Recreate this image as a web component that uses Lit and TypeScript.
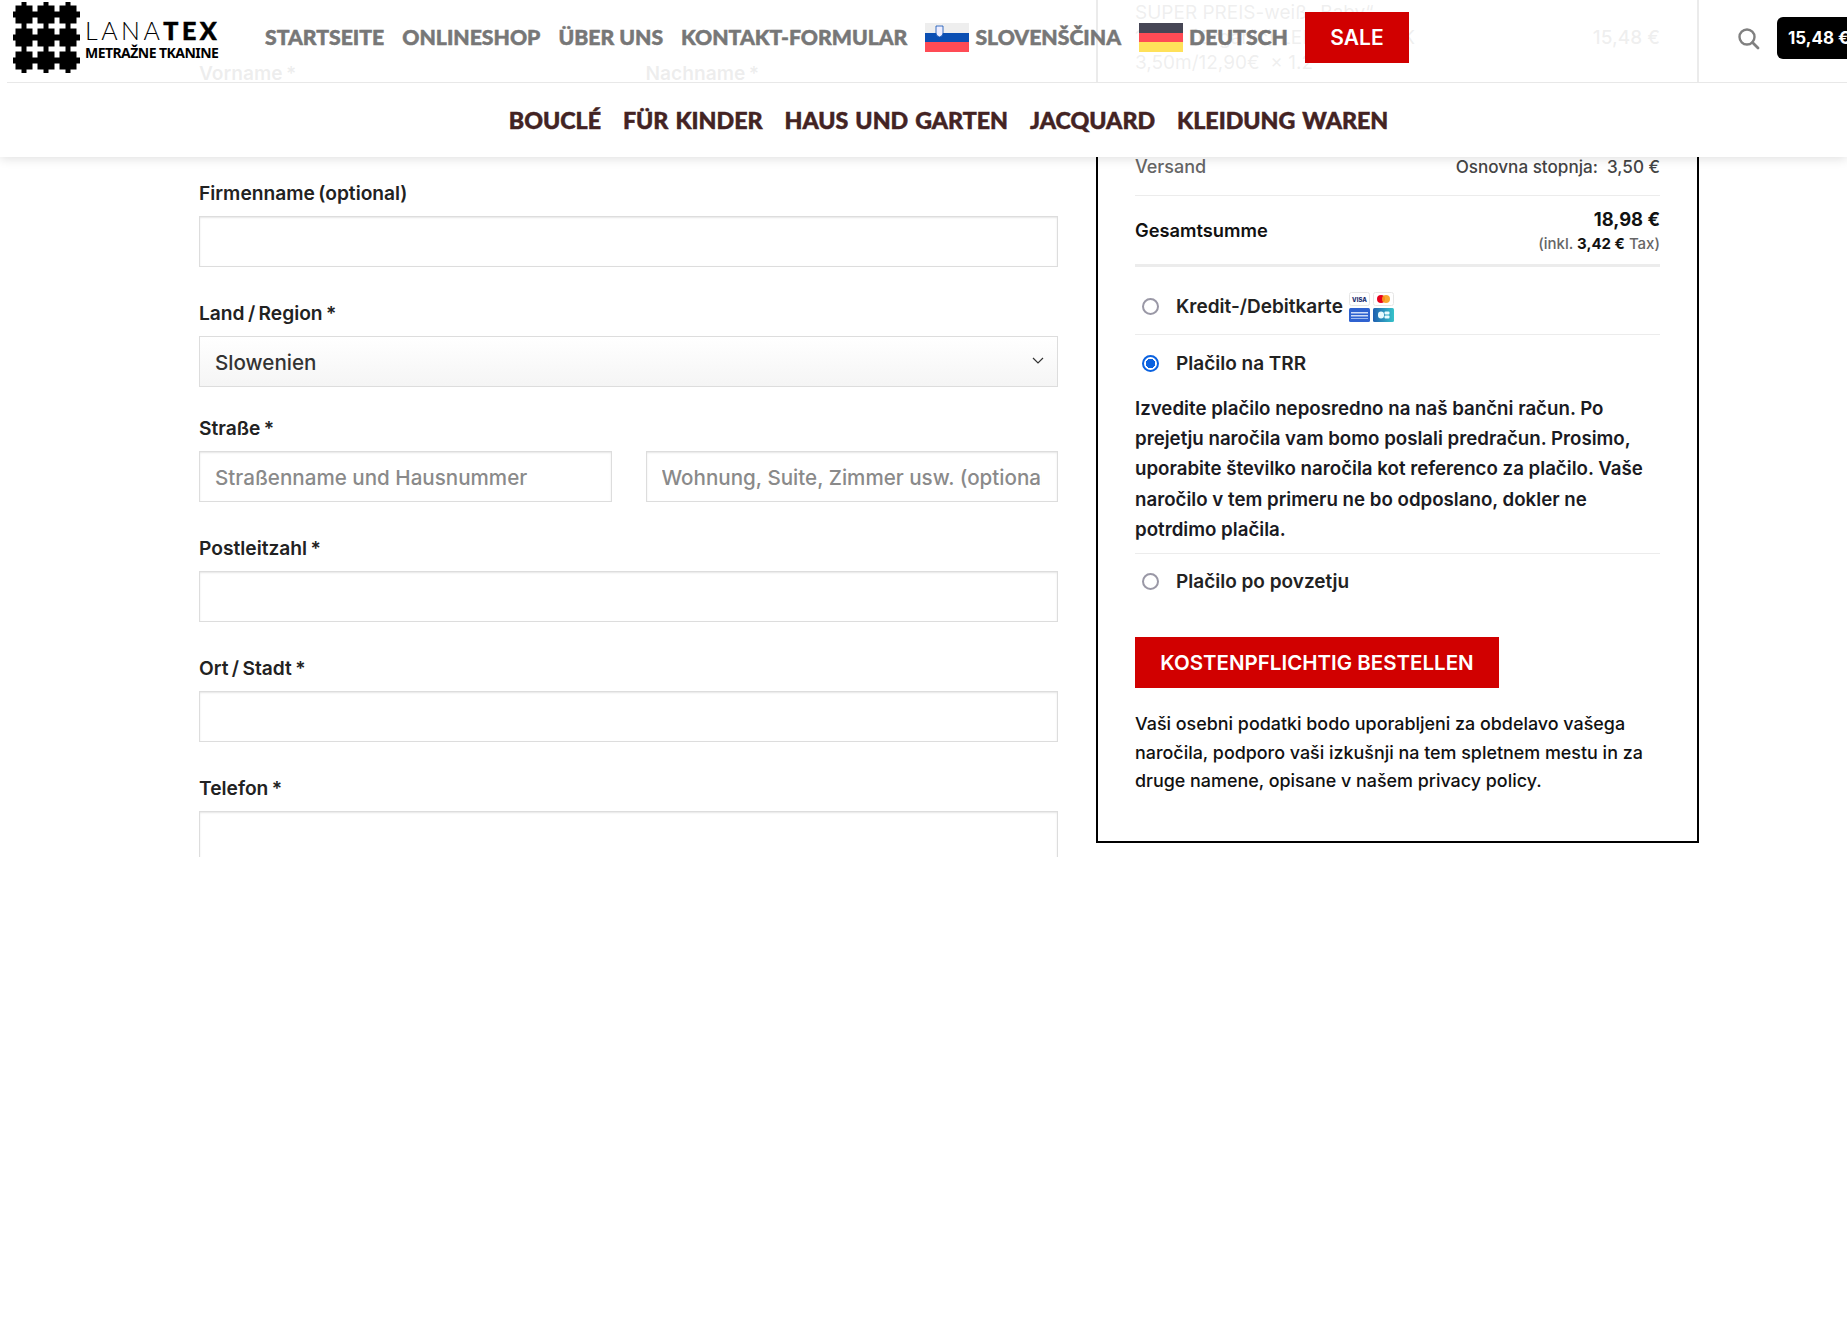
import { LitElement, html, css, svg } from "lit";
import { customElement } from "lit/decorators.js";

const HOLES_X = [13, 35, 57, 79];
const HOLES_Y = [3, 26, 49, 72];

@customElement("app-root")
export class AppRoot extends LitElement {
  static styles = css`
    :host { display: block; height: 1338px; background: #fff; font-family: Inter, "Noto Sans", sans-serif; color: #222; }
    * { box-sizing: border-box; }
    .viewport { position: relative; height: 857px; overflow: hidden; }
    .main { display: grid; grid-template-columns: 859px 603px; column-gap: 38px; padding-left: 199px; align-items: start; }

    .form { padding-top: 59px; display: flex; flex-direction: column; gap: 32px; }
    .row { display: block; }
    .row.tight { margin-bottom: -5px; }
    .label { display: block; height: 28px; line-height: 29px; margin-bottom: 9px; font-size: 19.2px; font-weight: 600; word-spacing: -1.5px; color: #222; }
    .pair { display: grid; grid-template-columns: 1fr 1fr; gap: 34px; }
    input, select { display: block; width: 100%; height: 51px; border: 1px solid #ddd; background: #fff; font: 500 20.6px Inter, sans-serif; color: #333; padding: 1px 15px 0; box-shadow: inset 0 1px 2px rgba(0,0,0,.1); border-radius: 0; outline: none; }
    input::placeholder { color: #8a8a8a; opacity: 1; }
    .select { position: relative; }
    select { appearance: none; background: linear-gradient(#fff, #f5f5f5); box-shadow: none; }
    .chev { position: absolute; right: 13px; top: 20px; width: 14px; height: 10px; pointer-events: none; }

    .card { margin-top: -60px; border: 2px solid #000; padding: 58px 37px 0; height: 903px; font-size: 18px; }
    .item { display: flex; justify-content: space-between; height: 75px; line-height: 25px; color: #333; font-size: 19px; font-weight: 400; }
    .item .price { padding-top: 25px; font-weight: 500; }
    .spacer { height: 75px; }
    .ship { display: flex; justify-content: space-between; height: 46px; padding-top: 3px; align-items: flex-start; line-height: 27px; border-bottom: 1px solid #ececec; color: #666; font-size: 18px; font-weight: 500; }
    .ship .r { color: #444; font-size: 17.1px; }
    .total { display: flex; justify-content: space-between; align-items: center; height: 71px; border-bottom: 3px solid #ececec; }
    .total .t { font-weight: 600; color: #111; font-size: 18.3px; }
    .total .amt { text-align: right; padding-top: 1px; }
    .total .big { font-size: 18.4px; font-weight: 700; line-height: 26px; color: #111; }
    .total .small { font-size: 15px; line-height: 24px; color: #666; font-weight: 500; }
    .total .small b { color: #111; font-weight: 700; }

    .pay { display: flex; align-items: center; padding-left: 7px; font-size: 19px; font-weight: 600; color: #222; }
    .pay.one { height: 68px; border-bottom: 1px solid #ececec; padding-top: 12px; }
    .pay.two { height: 56px; }
    .radio { width: 17px; height: 17px; border-radius: 50%; border: 2px solid #9a98a6; margin-right: 17px; flex: none; background: #fff; }
    .radio.on { border-color: #0b62e0; background: radial-gradient(circle, #0b62e0 0 4.5px, #fff 5px); }
    .cards { display: grid; grid-template-columns: 21px 21px; gap: 2px 3px; margin-left: 6px; margin-top: 1px; }
    .cards svg { display: block; width: 21px; height: 14px; }
    .desc { font-size: 18.7px; line-height: 30.2px; font-weight: 600; color: #1a1a22; padding: 3px 0 8px; border-bottom: 1px solid #ececec; }
    .pay.three { height: 58px; padding-bottom: 3px; }
    .btn { display: flex; align-items: center; justify-content: center; width: 364px; height: 51px; margin-top: 25px; background: #d10000; color: #fff; font-size: 20.5px; font-weight: 600; }
    .privacy { margin: 22px 0 0; font-size: 17.9px; line-height: 28.5px; font-weight: 500; color: #111; }

    .header { position: absolute; top: 0; left: 0; right: 0; box-shadow: 0 2px 10px rgba(0,0,0,.12); }
    .top { height: 83px; display: flex; align-items: flex-start; background: rgba(255,255,255,.92); margin-left: 7px; border-bottom: 1px solid #e8e8e8; position: relative; }
    .topbg { position: absolute; left: 0; top: 0; width: 7px; height: 83px; background: rgba(255,255,255,.92); }
    .logo { display: flex; flex: none; width: 258px; padding: 2px 0 0 6px; }
    .logo svg { width: 67px; height: 71px; flex: none; }
    .logotext { margin-left: 5px; color: #000; white-space: nowrap; }
    .lana { font: 300 25px/26px Lato, sans-serif; letter-spacing: 3.5px; margin-top: 15px; }
    .lana b { font-weight: 900; -webkit-text-stroke: .5px #000; }
    .sub { font: 700 14px/16px "Noto Sans", sans-serif; letter-spacing: -.55px; margin-top: 2px; }
    .nav1 { display: flex; align-items: center; height: 74px; gap: 18px; font: 900 21.2px Lato, sans-serif; color: #777; white-space: nowrap; -webkit-text-stroke: .5px #777; }
    .lang { display: flex; align-items: center; gap: 6px; }
    .flag { width: 44px; height: 29px; display: block; }
    .sale { flex: none; display: flex; align-items: center; justify-content: center; width: 104px; height: 51px; margin: 12px 0 0 17px; background: #d10000; color: #fff; font: 600 21px Inter, sans-serif; }
    .right { margin-left: auto; display: flex; align-items: center; height: 76px; gap: 17px; flex: none; width: 110px; overflow: hidden; }
    .search { width: 23px; height: 23px; flex: none; }
    .cart { flex: none; height: 42px; width: 90px; background: #000; color: #fff; border-radius: 6px; display: flex; align-items: center; padding-left: 11px; font: 700 17px Inter, sans-serif; white-space: nowrap; }
    .bottom { height: 74px; background: #fff; display: flex; justify-content: center; align-items: center; gap: 22px; padding-left: 50px; font: 900 23.2px Lato, sans-serif; word-spacing: 1.5px; color: #432323; white-space: nowrap; -webkit-text-stroke: .5px #432323; }
  `;

  private cross(x: number, y: number) {
    return svg`<path fill="#fff" d="M${x - 2.5} ${y - 8.5}h5v6h6v5h-6v6h-5v-6h-6v-5h6z"/>`;
  }

  private logo() {
    const offsetX = 13;
    const offsetY = 2;
    return html`<svg viewBox="0 0 67 71" aria-hidden="true">
      <rect x="0" y="0" width="67" height="71" fill="#000"/>
      ${HOLES_Y.map((y) => HOLES_X.map((x) => this.cross(x - offsetX, y - offsetY)))}
    </svg>`;
  }

  private field(label: string, ph = "") {
    return html`<div class="row"><span class="label">${label}</span><input placeholder=${ph} /></div>`;
  }

  render() {
    return html`
      <div class="viewport">
        <div class="main">
          <div class="form">
            <div class="pair">
              ${this.field("Vorname *")}
              ${this.field("Nachname *")}
            </div>
            ${this.field("Firmenname (optional)")}
            <div class="row tight">
              <span class="label">Land / Region *</span>
              <div class="select">
                <select><option>Slowenien</option></select>
                <svg class="chev" viewBox="0 0 14 10"><path d="M2 2l5 5 5-5" fill="none" stroke="#333" stroke-width="1.2"/></svg>
              </div>
            </div>
            <div class="row">
              <span class="label">Straße *</span>
              <div class="pair">
                <input placeholder="Straßenname und Hausnummer" />
                <input placeholder="Wohnung, Suite, Zimmer usw. (optional)" />
              </div>
            </div>
            ${this.field("Postleitzahl *")}
            ${this.field("Ort / Stadt *")}
            ${this.field("Telefon *")}
          </div>
          <div class="card">
            <div class="item">
              <div>SUPER PREIS-weiß „Baby“ -<br />100% (Organic) LEINEN BLACK<br />3,50m/12,90€ &nbsp;× 1.2</div>
              <div class="price">15,48 €</div>
            </div>
            <div class="spacer"></div>
            <div class="ship"><span>Versand</span><span class="r">Osnovna stopnja: &nbsp;3,50 €</span></div>
            <div class="total">
              <span class="t">Gesamtsumme</span>
              <div class="amt">
                <div class="big">18,98 €</div>
                <div class="small">(inkl. <b>3,42 €</b> Tax)</div>
              </div>
            </div>
            <div class="pay one">
              <span class="radio"></span>Kredit-/Debitkarte
              <span class="cards">
                <svg viewBox="0 0 21 14"><rect x=".5" y=".5" width="20" height="13" rx="2" fill="#fff" stroke="#e6e6e6"/><text x="10.5" y="9.500" text-anchor="middle" font-family="Inter, sans-serif" font-size="6" font-weight="800" fill="#1a2a6c">VISA</text></svg>
                <svg viewBox="0 0 21 14"><rect x=".5" y=".5" width="20" height="13" rx="2" fill="#fff" stroke="#e6e6e6"/><circle cx="8" cy="7" r="4" fill="#e8001c"/><circle cx="13" cy="7" r="4" fill="#f79e1b" fill-opacity=".9"/></svg>
                <svg viewBox="0 0 21 14"><rect width="21" height="14" rx="1.500" fill="#2f62d0"/><rect x="2" y="4" width="17" height="1.500" fill="#cfdcf8"/><rect x="2" y="7" width="17" height="1.500" fill="#cfdcf8"/><rect x="2" y="10" width="17" height="1" fill="#9fbaf0"/></svg>
                <svg viewBox="0 0 21 14"><defs><linearGradient id="cb" x1="0" x2="1"><stop offset="0" stop-color="#1f5fb0"/><stop offset="1" stop-color="#36c3c9"/></linearGradient></defs><rect width="21" height="14" rx="1.500" fill="url(#cb)"/><rect x="5" y="3.500" width="6" height="7" rx="3" fill="#e8fbff"/><rect x="11.500" y="3.500" width="5" height="3" rx="1" fill="#e8fbff"/><rect x="11.500" y="7.500" width="5" height="3" rx="1" fill="#e8fbff"/></svg>
              </span>
            </div>
            <div class="pay two"><span class="radio on"></span>Plačilo na TRR</div>
            <div class="desc">Izvedite plačilo neposredno na naš bančni račun. Po prejetju naročila vam bomo poslali predračun. Prosimo, uporabite številko naročila kot referenco za plačilo. Vaše naročilo v tem primeru ne bo odposlano, dokler ne potrdimo plačila.</div>
            <div class="pay three"><span class="radio"></span>Plačilo po povzetju</div>
            <div class="btn">KOSTENPFLICHTIG BESTELLEN</div>
            <p class="privacy">Vaši osebni podatki bodo uporabljeni za obdelavo vašega naročila, podporo vaši izkušnji na tem spletnem mestu in za druge namene, opisane v našem privacy policy.</p>
          </div>
        </div>

        <div class="header">
          <div class="topbg"></div>
          <div class="top">
            <div class="logo">
              ${this.logo()}
              <div class="logotext">
                <div class="lana">LANA<b>TEX</b></div>
                <div class="sub">METRAŽNE TKANINE</div>
              </div>
            </div>
            <div class="nav1">
              <span>STARTSEITE</span><span>ONLINESHOP</span><span>ÜBER UNS</span><span>KONTAKT-FORMULAR</span>
              <span class="lang">
                <svg class="flag" viewBox="0 0 44 29"><rect width="44" height="10" fill="#eee"/><rect y="10" width="44" height="10" fill="#0b4fb3"/><rect y="19" width="44" height="10" fill="#ff4b55"/><path d="M11 3h7v7q0 3-3.500 4-3.500-1-3.500-4z" fill="#eef" stroke="#0b4fb3" stroke-width=".8"/></svg>
                SLOVENŠČINA
              </span>
              <span class="lang">
                <svg class="flag" viewBox="0 0 44 29"><rect width="44" height="10" fill="#464655"/><rect y="10" width="44" height="10" fill="#ff4b55"/><rect y="19" width="44" height="10" fill="#ffe15a"/></svg>
                DEUTSCH
              </span>
            </div>
            <div class="sale">SALE</div>
            <div class="right">
              <svg class="search" viewBox="0 0 23 23"><circle cx="10" cy="10" r="7.500" fill="none" stroke="#808080" stroke-width="2.400"/><path d="M15.500 15.500L21 21" stroke="#808080" stroke-width="2.800" stroke-linecap="round"/></svg>
              <div class="cart">15,48 €</div>
            </div>
          </div>
          <div class="bottom">
            <span>BOUCLÉ</span><span>FÜR KINDER</span><span>HAUS UND GARTEN</span><span>JACQUARD</span><span>KLEIDUNG WAREN</span>
          </div>
        </div>
      </div>
    `;
  }
}
